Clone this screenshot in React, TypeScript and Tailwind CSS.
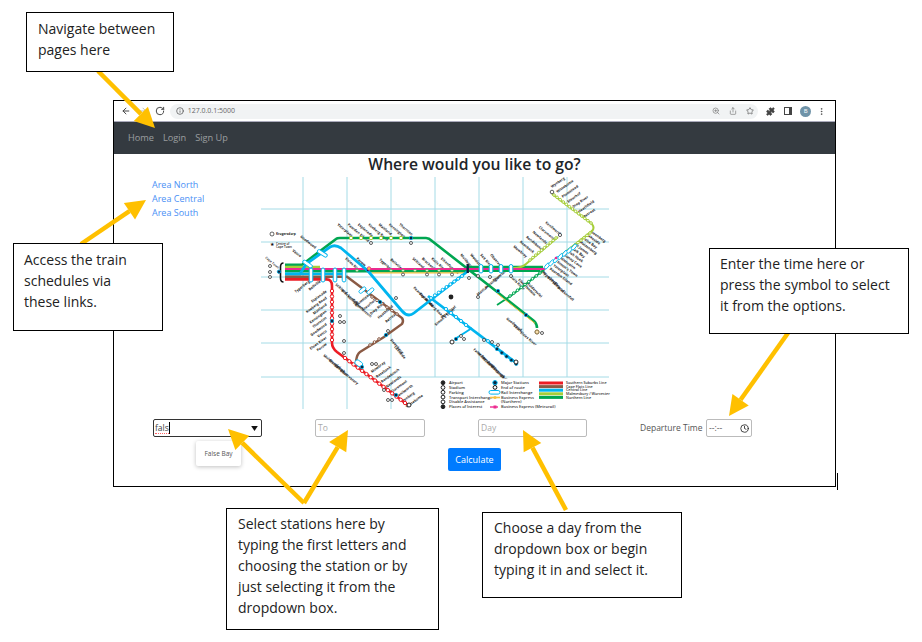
import { ArrowLeft, ArrowRight, RotateCw, Info, ZoomIn, Share, Star, Puzzle, MoreVertical, Clock } from "lucide-react";

const FONT = "font-['Open_Sans','Noto_Sans',sans-serif]";
type P = [number, number];

const NAMES = ["Ysterplaat","Paarden Eiland","Esplanade","Koeberg Road","Maitland","Kensington","Thornton","Goodwood","Vasco","Elsies River","Parow","Tygerberg","Bellville","Stikland","Brackenfell","Kuils River","Eikenfontein","Muldersvlei","Woodstock","Salt River","Observatory","Mowbray","Rosebank","Rondebosch","Newlands","Claremont","Kenilworth","Wynberg","Wittebome","Plumstead","Steurhof","Diep River","Heathfield","Retreat","Steenberg","Lakeside","False Bay","Muizenberg","St James","Kalk Bay","Fish Hoek","Sunny Cove","Glencairn","Simon's Town"];

const LABEL_GROUPS: { x: number; y: number; dx: number; dy: number; n: number; a: number; end?: boolean }[] = [
  { x: 337, y: 225, dx: 10.3, dy: 0, n: 7, a: 40 },
  { x: 300, y: 237, dx: -8, dy: 14, n: 2, a: 38 },
  { x: 345, y: 259, dx: 11, dy: 0, n: 2, a: 42 },
  { x: 379, y: 260, dx: 11, dy: 0, n: 2, a: 42 },
  { x: 412, y: 259, dx: 9.5, dy: 0, n: 4, a: 42 },
  { x: 460, y: 255, dx: 10, dy: 0, n: 4, a: 50 },
  { x: 513, y: 247, dx: 6.4, dy: -4.8, n: 6, a: 40 },
  { x: 552, y: 188, dx: 5.4, dy: 5, n: 7, a: -35 },
  { x: 590, y: 232, dx: -3.7, dy: 3.4, n: 12, a: 36 },
  { x: 327, y: 292, dx: 0, dy: 6.6, n: 9, a: -36, end: true },
  { x: 310, y: 282, dx: 11, dy: 0, n: 2, a: -38, end: true },
  { x: 335, y: 285, dx: 6, dy: 6, n: 4, a: 40 },
  { x: 323, y: 356, dx: 5.5, dy: 5, n: 4, a: 38, end: false },
  { x: 372, y: 373, dx: 5, dy: 5, n: 8, a: -36 },
  { x: 356, y: 307, dx: 7.6, dy: 4, n: 5, a: -40 },
  { x: 390, y: 340, dx: 4, dy: 7, n: 2, a: 50 },
  { x: 473, y: 350, dx: 4.4, dy: 4.3, n: 7, a: 40 },
  { x: 436, y: 326, dx: 6, dy: -7, n: 2, a: -40 },
  { x: 413, y: 288, dx: 6, dy: 6, n: 3, a: 45 },
  { x: 478, y: 296, dx: 8, dy: -7, n: 3, a: -40 },
  { x: 506, y: 319, dx: 7, dy: 7, n: 3, a: 40 },
  { x: 537, y: 268, dx: 5, dy: 5, n: 5, a: 40 },
  { x: 510, y: 277, dx: 8, dy: 3, n: 3, a: 45 },
];

function chain(a: P, b: P, step: number): P[] {
  const len = Math.hypot(b[0] - a[0], b[1] - a[1]);
  const n = Math.max(1, Math.round(len / step));
  return Array.from({ length: n + 1 }, (_, i) => [a[0] + ((b[0] - a[0]) * i) / n, a[1] + ((b[1] - a[1]) * i) / n] as P);
}

function Dots({ pts, color, r = 1.5 }: { pts: P[]; color: string; r?: number }) {
  return (
    <>
      {pts.map(([x, y], i) => (
        <circle key={i} cx={x} cy={y} r={r} fill="#fff" stroke={color} strokeWidth={1} />
      ))}
    </>
  );
}

function TubeV({ x, y, h = 13, w = 3.6 }: { x: number; y: number; h?: number; w?: number }) {
  return <rect x={x - w / 2} y={y} width={w} height={h} rx={w / 2} fill="#fff" stroke="#00b5ef" strokeWidth={1} />;
}

function Marker({ x, y }: { x: number; y: number }) {
  return <circle cx={x} cy={y} r={1.5} fill="#fff" stroke="#333" strokeWidth={0.8} />;
}

function Major({ x, y }: { x: number; y: number }) {
  return <circle cx={x} cy={y} r={1.7} fill="#0a2540" stroke="#00a9e0" strokeWidth={0.8} />;
}

function MapDrawing() {
  const RED = "#ed1c24", BROWN = "#8a5a44", BLUE = "#00b5ef", LIME = "#a6ce39", GREEN = "#00a651", MAG = "#ec2a90", YEL = "#f5c242";
  let nameIndex = 0;
  return (
    <svg viewBox="255 175 360 240" className="w-[360px] h-[240px] shrink-0" fontFamily="'Open Sans', sans-serif">
      {[303, 347, 391].map((x) => <line key={x} x1={x} x2={x} y1={177} y2={409} stroke="#a4dbe6" strokeWidth={1} />)}
      {[435, 479, 523, 567].map((x) => <line key={x} x1={x} x2={x} y1={177} y2={377} stroke="#a4dbe6" strokeWidth={1} />)}
      {[209, 242, 277, 310, 343, 377].map((y) => <line key={y} x1={261} x2={609} y1={y} y2={y} stroke="#a4dbe6" strokeWidth={1} />)}

      {LABEL_GROUPS.map((g, gi) =>
        Array.from({ length: g.n }, (_, i) => {
          const name = NAMES[nameIndex++ % NAMES.length];
          const x = g.x + g.dx * i, y = g.y + g.dy * i;
          return (
            <text key={`${gi}-${i}`} x={x} y={y} fontSize={3.6} fill="#222" fontWeight={700} textAnchor={g.end ? "end" : "start"} transform={`rotate(${g.a} ${x} ${y})`}>
              {name}
            </text>
          );
        })
      )}

      {/* Northern */}
      <path d="M285 264.7 H302 L336 239 Q337 238 340 238 H426 Q429 238 432 241 L496 291 L534 321 Q537 324 537 328" fill="none" stroke={GREEN} strokeWidth={2.6} />
      <path d="M467 267 H543" fill="none" stroke={GREEN} strokeWidth={2.6} />
      <path d="M545 269 L512 295 L497 305" fill="none" stroke={GREEN} strokeWidth={1.8} />
      <Dots pts={chain([540, 273], [510, 296], 5)} color={GREEN} r={1.3} />
      <path d="M498 292 L536 322" fill="none" stroke={YEL} strokeWidth={1} transform="translate(-1 1.4)" />
      {/* Malmesbury */}
      <path d="M285 267 H320" stroke={LIME} strokeWidth={2.4} />
      <path d="M552 194 L592 224 Q595 228 592 231 L545 268" fill="none" stroke={LIME} strokeWidth={2} />
      <path d="M558 237 L526 264 Q522 268 513 268" fill="none" stroke={LIME} strokeWidth={2} />
      <Dots pts={chain([554, 195], [591, 223], 4)} color={LIME} r={1.3} />
      <Dots pts={chain([590, 233], [575, 245], 4)} color={LIME} r={1.3} />
      <Dots pts={chain([556, 238], [530, 260], 4)} color={LIME} r={1.3} />
      <Dots pts={chain([351, 238], [401, 238], 10)} color={LIME} r={1.7} />
      {/* central bundle */}
      <path d="M285 271.3 H467" stroke={GREEN} strokeWidth={2.4} />
      <path d="M285 269 H545" stroke={MAG} strokeWidth={1.8} />
      <path d="M372 272.9 H467" stroke={YEL} strokeWidth={1.2} />
      <path d="M467 271 H540" stroke={GREEN} strokeWidth={2} />
      {/* Central */}
      <path d="M285 274 H300 L306 264 L330 247 Q335 244 341 248 L368 271 L402 311 Q408 318 414 313 L468 271" fill="none" stroke={BLUE} strokeWidth={2.8} />
      <path d="M285 274 H346" stroke={BLUE} strokeWidth={2.6} />
      <path d="M428 296 L515 362" fill="none" stroke={BLUE} strokeWidth={2.8} />
      <path d="M472 328 L455 339" fill="none" stroke={BLUE} strokeWidth={2} />
      <Dots pts={chain([431, 298], [462, 276], 5)} color={BLUE} r={1.5} />
      <Dots pts={chain([446, 309], [466, 325], 6)} color={BLUE} r={1.6} />
      <Dots pts={chain([488, 341], [496, 347], 8)} color={BLUE} r={1.5} />
      {/* Cape Flats */}
      <path d="M285 276.7 H347 L402 318 Q404 321 402 324 L384 337 L360 352 Q357 354 356 361" fill="none" stroke={BROWN} strokeWidth={2.4} />
      <Dots pts={chain([372, 297], [397, 314], 6.5)} color={BROWN} r={1.3} />
      <Dots pts={chain([379, 339], [370, 345], 6)} color={BROWN} r={1.3} />
      {/* Southern */}
      <path d="M285 279.4 H326 Q332 279 332 286 V343 Q332 348 337 352 L408 405" fill="none" stroke={RED} strokeWidth={2.6} />
      <Dots pts={chain([332, 291], [332, 340], 5.4)} color={RED} r={1.7} />
      <Dots pts={chain([345, 358], [405, 403], 5.2)} color={RED} r={1.7} />

      {/* pass-throughs */}
      {[311, 323, 335, 344].map((x) => <TubeV key={x} x={x} y={268} h={14} />)}
      {[481, 491, 501, 511].map((x) => <TubeV key={x} x={x} y={264.5} h={8.5} />)}
      <rect x={317} y={251.5} width={11} height={3.4} rx={1.7} fill="#fff" stroke={BLUE} strokeWidth={0.9} transform="rotate(32 322 253)" />
      <rect x={302} y={262} width={11} height={3.4} rx={1.7} fill="#fff" stroke={BLUE} strokeWidth={0.9} transform="rotate(35 307 264)" />
      <rect x={361} y={286.5} width={3.4} height={8} rx={1.7} fill="#fff" stroke={BLUE} strokeWidth={0.9} transform="rotate(50 363 290)" />
      <rect x={369} y={287.5} width={3.4} height={8} rx={1.7} fill="#fff" stroke={BLUE} strokeWidth={0.9} transform="rotate(50 371 291)" />
      <rect x={355} y={361} width={8} height={5} rx={2} fill="#fff" stroke={BLUE} strokeWidth={0.9} transform="rotate(35 359 363)" />
      {chain([547, 266], [574, 247], 5.5).map(([x, y], i) => (
        <rect key={i} x={x - 1.5} y={y - 3.4} width={3} height={6.8} rx={1.5} fill="#fff" stroke={BLUE} strokeWidth={0.9} transform={`rotate(40 ${x} ${y})`} />
      ))}
      <Dots pts={[[357, 270.5], [391, 270.5], [403, 270.5], [415, 270.5], [427, 270.5], [439, 270.5], [452, 270.5]]} color="#5cb85c" r={1.2} />

      {/* stations & markers */}
      <path d="M283.5 263 Q280.5 263 280.5 267 V278 Q280.5 282 283.5 282" fill="none" stroke="#111" strokeWidth={1.6} />
      <Major x={279} y={271.7} />
      <Major x={411} y={238} />
      <Major x={368} y={270} />
      <Major x={332} y={321} />
      <Major x={386} y={335} />
      <Major x={380} y={302} />
      <Major x={362} y={367} />
      <Major x={396} y={395} />
      <Major x={456} y={339} />
      <Major x={498} y={291} />
      <Major x={526} y={315} />
      {[0, 1, 2, 3, 4].map((i) => <Major key={i} x={497 + i * 4.8} y={349 + i * 3.7} />)}
      <rect x={466.5} y={264} width={2.4} height={9} fill="#0a2540" />
      <circle cx={552} cy={192} r={1.8} fill="#fff" stroke="#333" strokeWidth={0.8} />
      <circle cx={560} cy={235} r={1.6} fill="#fff" stroke="#333" strokeWidth={0.8} />
      <circle cx={516} cy={362} r={2} fill="#fff" stroke="#111" strokeWidth={0.9} />
      <circle cx={452} cy={342} r={2} fill="#fff" stroke="#111" strokeWidth={0.9} />
      <circle cx={409} cy={405} r={2} fill="#fff" stroke="#111" strokeWidth={0.9} />
      <circle cx={537} cy={332} r={2} fill="#fff" stroke="#111" strokeWidth={0.9} />
      <circle cx={537} cy={332} r={2.4} fill="#f0c060" fillOpacity={0.5} />
      <circle cx={451} cy={297} r={2.4} fill="#222" />
      <circle cx={369} cy={268.5} r={1.8} fill="#f5c242" stroke={MAG} strokeWidth={0.8} />
      <circle cx={472} cy={269} r={1.1} fill={MAG} />
      <circle cx={556} cy={258} r={1.3} fill={MAG} />
      {([[270, 266], [270, 272], [270, 277], [371, 243], [411, 243], [403, 274.5], [427, 274.5], [439, 274.5], [452, 274.5], [469, 278], [478, 276], [490, 277], [511, 276], [340, 316], [340, 322], [344, 322], [344, 341], [344, 353], [372, 364], [376, 364], [388, 331], [396, 298], [478, 297], [484, 340], [461, 336], [464, 339], [492, 342], [498, 345], [542, 333], [388, 400], [392, 400], [384, 390]] as P[]).map(([x, y], i) => <Marker key={i} x={x} y={y} />)}
      <circle cx={272} cy={234} r={2} fill="#fff" stroke="#222" strokeWidth={0.7} />
      <text x={276} y={235} fontSize={3.2} fontWeight={700} fill="#222">Krugersdorp</text>
      <text x={272} y={246} fontSize={5} fill="#111" textAnchor="middle">★</text>
      <text x={276} y={245} fontSize={3} fontWeight={600} fill="#222">Centre of</text>
      <text x={276} y={248} fontSize={3} fontWeight={600} fill="#222">Cape Town</text>
      <text x={265} y={258} fontSize={3.2} fontWeight={600} fill="#222" transform="rotate(40 265 258)">Cape Town</text>

      {/* legend */}
      <rect x={436} y={378.5} width={175} height={33} fill="#fff" />
      {["Airport", "Stadium", "Parking", "Transport Interchange", "Disable Assistance", "Places of Interest"].map((t, i) => (
        <g key={t}>
          <circle cx={443} cy={382.7 + i * 4.8} r={1.9} fill={i === 5 || i === 0 ? "#222" : "#fff"} stroke="#222" strokeWidth={1} />
          <text x={449} y={384.2 + i * 4.8} fontSize={4} fontWeight={600} fill="#333">{t}</text>
        </g>
      ))}
      <circle cx={495} cy={382.7} r={2.2} fill="#0a2540" stroke={BLUE} strokeWidth={1} />
      <circle cx={495} cy={387.4} r={1.9} fill="#fff" stroke="#111" strokeWidth={1} />
      <rect x={489} y={390.5} width={11} height={3.6} rx={1.8} fill="#fff" stroke={BLUE} strokeWidth={1} />
      <path d="M490 397.5 H500" stroke={YEL} strokeWidth={1.6} />
      <circle cx={495} cy={397.5} r={1.6} fill={YEL} />
      <path d="M490 407 H498" stroke={MAG} strokeWidth={1.4} />
      <rect x={493.5} y={405.5} width={3} height={3} fill={MAG} />
      {["Major Stations", "End of route", "Rail Interchange", "Business Express", "(Northern)", "", "Business Express (Metrorail)"].map((t, i) =>
        t ? <text key={t} x={501} y={384.2 + (i > 4 ? 23.5 : i * 4.8)} fontSize={4} fontWeight={600} fill="#333">{t}</text> : null
      )}
      {[RED, BROWN, BLUE, LIME, GREEN].map((c, i) => <rect key={c} x={539} y={381.5 + i * 3.6} width={24} height={3} fill={c} />)}
      {["Southern Suburbs Line", "Cape Flats Line", "Central Line", "Malmesbury / Worcester", "Northern Line"].map((t, i) => (
        <text key={t} x={566} y={384.2 + i * 3.6} fontSize={3.7} fontWeight={600} fill="#333">{t}</text>
      ))}
    </svg>
  );
}

function Callout({ className, lines }: { className: string; lines: string[] }) {
  return (
    <div className={`absolute bg-white border border-black text-[14px] leading-[21px] text-[#222] ${className}`}>
      {lines.map((l) => <div key={l} className="whitespace-nowrap">{l}</div>)}
    </div>
  );
}

function Arrows() {
  const arrows: [P, P][] = [
    [[98, 71], [155, 128]],
    [[81, 244], [146, 200]],
    [[304, 503], [228, 429]],
    [[304, 503], [348, 430]],
    [[566, 510], [523, 430]],
    [[788, 333], [729, 416]],
  ];
  return (
    <svg className="absolute left-0 top-0 w-[922px] h-[642px] pointer-events-none" viewBox="0 0 922 642">
      {arrows.map(([a, b], i) => {
        const ang = Math.atan2(b[1] - a[1], b[0] - a[0]);
        const L = 20, W = 10;
        const bx = b[0] - L * Math.cos(ang), by = b[1] - L * Math.sin(ang);
        const nx = -Math.sin(ang) * W, ny = Math.cos(ang) * W;
        return (
          <g key={i}>
            <line x1={a[0]} y1={a[1]} x2={bx} y2={by} stroke="#ffc000" strokeWidth={4.5} />
            <polygon points={`${b[0]},${b[1]} ${bx + nx},${by + ny} ${bx - nx},${by - ny}`} fill="#ffc000" />
          </g>
        );
      })}
    </svg>
  );
}

export default function App() {
  return (
    <div className={`relative w-[922px] h-[642px] bg-white overflow-hidden ${FONT}`}>
      {/* Browser window */}
      <div className="absolute left-[113px] top-[100px] w-[723px] h-[387px] border border-black bg-white flex flex-col overflow-hidden">
        <div className="h-[20px] shrink-0 bg-white flex items-center text-[#444] pl-[7px] pr-[9px]">
          <ArrowLeft size={10} strokeWidth={2.4} />
          <ArrowRight size={10} strokeWidth={2.4} className="ml-[7px] text-[#bbb]" />
          <RotateCw size={10} strokeWidth={2.4} className="ml-[7px]" />
          <div className="ml-[5px] w-[595px] h-[15px] rounded-full bg-[#f1f3f4] flex items-center pl-[6px] pr-[4px]">
            <Info size={8} strokeWidth={2} />
            <span className="ml-[4px] text-[7px] text-[#666]">127.0.0.1:5000</span>
            <div className="ml-auto flex items-center gap-[9px] text-[#777]">
              <ZoomIn size={8} />
              <Share size={8} />
              <Star size={8} className="text-[#555]" />
            </div>
          </div>
          <Puzzle size={9} fill="#444" className="ml-[8px] text-[#444]" />
          <div className="ml-[9px] w-[8px] h-[8px] border-[1.5px] border-[#444] border-r-[3px]" />
          <div className="ml-[8px] w-[11px] h-[11px] rounded-full bg-[#6f93a8] text-white text-[6px] flex items-center justify-center">B</div>
          <MoreVertical size={9} className="ml-[6px]" />
        </div>
        <div className="h-[33px] shrink-0 bg-[#343a40] border-t border-[#aab] flex items-center gap-[9px] pl-[14px] text-[9.2px] text-white/50">
          <span>Home</span>
          <span>Login</span>
          <span>Sign Up</span>
        </div>
        <h1 className="h-[21px] shrink-0 text-center text-[15.7px] leading-[21px] font-semibold text-[#212529]">Where would you like to go?</h1>
        <div className="flex shrink-0 h-[240px]">
          <div className="w-[141px] shrink-0 pl-[38px] pt-[3px] text-[9px] leading-[14px] text-[#4a90f5]">
            <div>Area North</div>
            <div>Area Central</div>
            <div>Area South</div>
          </div>
          <MapDrawing />
        </div>
        <div className="flex items-center mt-[4px] pl-[39px] h-[18px] shrink-0 text-[8.5px]">
          <div className="relative w-[109px] h-[18px] border-[1.5px] border-[#333] rounded-[2px] flex items-center pl-[1px] text-[#444]">
            <span className="border-b border-dotted border-red-400 leading-[11px]">fals</span>
            <span className="w-px h-[12px] bg-black" />
            <svg viewBox="0 0 8 6" className="absolute right-[3px] top-[6px] w-[7px] h-[5px]"><path d="M0 0 H8 L4 6 Z" fill="#111" /></svg>
            <div className="absolute left-[42px] top-[21px] w-[45px] h-[25px] bg-white rounded-[2px] shadow-[0_1px_4px_rgba(0,0,0,0.25)] flex items-center justify-center text-[6.5px] text-[#555]">False Bay</div>
          </div>
          <div className="ml-[53px] w-[110px] h-[18px] border border-[#bbb] rounded-[2px] flex items-center pl-[2px] text-[#aaa]">To</div>
          <div className="ml-[53px] w-[109px] h-[18px] border border-[#bbb] rounded-[2px] flex items-center pl-[2px] text-[#aaa]">Day</div>
          <span className="ml-[53px] w-[66px] shrink-0 text-[#555] text-[8.5px] whitespace-nowrap">Departure Time</span>
          <div className="w-[46px] h-[18px] border border-[#bbb] rounded-[2px] flex items-center justify-between px-[2px] text-[#555] text-[8.5px]">
            <span>--:--</span>
            <Clock size={9} strokeWidth={2.2} className="text-[#222]" />
          </div>
        </div>
        <div className="flex justify-center mt-[11px] shrink-0">
          <div className="w-[53px] h-[23px] bg-[#007bff] rounded-[2px] text-white text-[9px] flex items-center justify-center">Calculate</div>
        </div>
      </div>
      <div className="absolute left-[837px] top-[473px] w-px h-[17px] bg-black" />

      <Arrows />

      <Callout className="left-[26px] top-[12px] w-[148px] h-[60px] pl-[11px] pt-[5px]" lines={["Navigate between", "pages here"]} />
      <Callout className="left-[13px] top-[243px] w-[150px] h-[88px] pl-[10px] pt-[5px]" lines={["Access the train", "schedules via", "these links."]} />
      <Callout className="left-[709px] top-[248px] w-[200px] h-[86px] pl-[10px] pt-[4px]" lines={["Enter the time here or", "press the symbol to select", "it from the options."]} />
      <Callout className="left-[226px] top-[508px] w-[213px] h-[122px] pl-[11px] pt-[4px]" lines={["Select stations here by", "typing the first letters and", "choosing the station or by", "just selecting it from the", "dropdown box."]} />
      <Callout className="left-[482px] top-[512px] w-[200px] h-[86px] pl-[11px] pt-[4px]" lines={["Choose a day from the", "dropdown box or begin", "typing it in and select it."]} />
    </div>
  );
}
